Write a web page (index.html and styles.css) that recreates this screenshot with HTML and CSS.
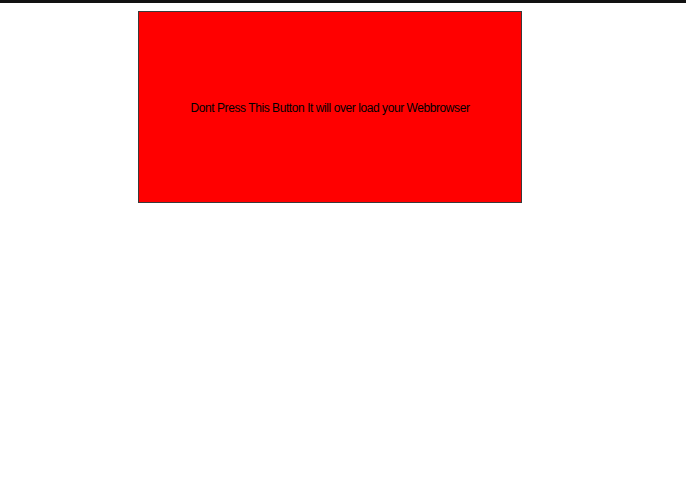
FILE: index.html
```html
<!DOCTYPE html>
<html>
<head>
<meta charset="utf-8">
<link rel="stylesheet" href="styles.css">
</head>
<body>
<div class="topbar"></div>
<main class="page">
  <button class="danger-btn">Dont Press This Button It will over load your Webbrowser</button>
</main>
</body>
</html>
```
FILE: styles.css
```css
html, body {
  margin: 0;
  padding: 0;
  background: #ffffff;
}
.topbar {
  height: 3px;
  background: #111111;
}
.page {
  padding: 8px 0 0 138px;
}
.danger-btn {
  display: block;
  box-sizing: border-box;
  width: 384px;
  height: 192px;
  margin: 0;
  padding: 1px 0 0 0;
  background: #ff0000;
  border: 1px solid #3a3a3a;
  color: #000000;
  font-family: "Liberation Sans", Arial, sans-serif;
  font-size: 12px;
  letter-spacing: -0.43px;
  text-align: center;
  cursor: pointer;
}
```
